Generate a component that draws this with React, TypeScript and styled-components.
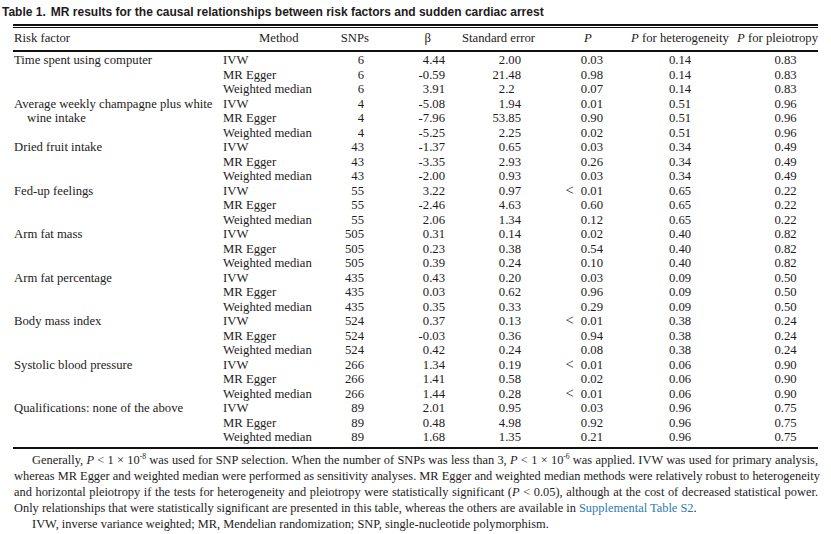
import React from 'react';
import styled, { createGlobalStyle } from 'styled-components';

const GlobalStyle = createGlobalStyle`
  html, body {
    margin: 0;
    padding: 0;
    background: #ffffff;
  }
`;

const Page = styled.div`
  width: 831px;
  box-sizing: border-box;
  padding: 5px 13px 0 13px;
  color: #1d1b1b;
  font-family: 'Liberation Serif', 'Times New Roman', serif;
`;

const Title = styled.div`
  margin-left: -11px;
  font-family: 'Liberation Sans', Arial, sans-serif;
  font-size: 12px;
  font-weight: 700;
  line-height: 14px;
  white-space: nowrap;

  b {
    margin-right: 5px;
  }
`;

const DoubleRule = styled.div`
  margin-top: 5px;
  height: 1px;
  border-top: 2px solid #111;
  border-bottom: 1px solid #111;
`;

const Table = styled.table`
  width: 805px;
  table-layout: fixed;
  border-collapse: collapse;
  font-size: 12.7px;
  border-bottom: 2px solid #111;

  thead tr {
    border-bottom: 2px solid #111;
  }

  tbody tr:first-child td {
    padding-top: 1px;
  }

  tbody tr:last-child td {
    padding-bottom: 2px;
  }
`;

const Col = styled.col<{ $w: number }>`
  width: ${p => p.$w}px;
`;

type Align = 'left' | 'right' | 'center';

const Th = styled.th<{ $align: Align; $pl?: number; $pr?: number }>`
  font-weight: 400;
  text-align: ${p => p.$align};
  padding: 3px ${p => p.$pr ?? 0}px 5px ${p => p.$pl ?? 0}px;
  line-height: 14px;
  white-space: nowrap;
`;

const Td = styled.td<{ $align: Align; $pl?: number; $pr?: number }>`
  text-align: ${p => p.$align};
  padding: 0 ${p => p.$pr ?? 0}px 0 ${p => p.$pl ?? 0}px;
  line-height: 14.5px;
  white-space: nowrap;
  vertical-align: top;
`;

const FactorCell = styled.td`
  padding: 0 0 0 14px;
  text-indent: -13px;
  line-height: 14.5px;
  vertical-align: top;
`;

const Frac = styled.span`
  display: inline-block;
  width: 1.25em;
  text-align: left;
`;

const Less = styled.span`
  font-size: 1.15em;
  line-height: 0;
  margin-right: 7px;
`;

const Notes = styled.div`
  margin-top: 3px;
  width: 805px;
  font-size: 12.4px;
  line-height: 16px;
`;

const NoteLine = styled.span<{ $indent?: boolean; $last?: boolean }>`
  display: block;
  white-space: nowrap;
  text-align: ${p => (p.$last ? 'left' : 'justify')};
  text-align-last: ${p => (p.$last ? 'left' : 'justify')};
  padding-left: ${p => (p.$indent ? 19 : 1)}px;
`;

const Sup = styled.sup`
  font-size: 7.5px;
  line-height: 0;
  vertical-align: 5px;
`;

const Link = styled.a`
  color: #2a7ab8;
  text-decoration: none;
`;

type Row = [string, number, string, string, string, string, string];

const groups: [string, Row[]][] = [
  ['Time spent using computer', [
    ['IVW', 6, '4.44', '2.00', '0.03', '0.14', '0.83'],
    ['MR Egger', 6, '-0.59', '21.48', '0.98', '0.14', '0.83'],
    ['Weighted median', 6, '3.91', '2.2', '0.07', '0.14', '0.83'],
  ]],
  ['Average weekly champagne plus white wine intake', [
    ['IVW', 4, '-5.08', '1.94', '0.01', '0.51', '0.96'],
    ['MR Egger', 4, '-7.96', '53.85', '0.90', '0.51', '0.96'],
    ['Weighted median', 4, '-5.25', '2.25', '0.02', '0.51', '0.96'],
  ]],
  ['Dried fruit intake', [
    ['IVW', 43, '-1.37', '0.65', '0.03', '0.34', '0.49'],
    ['MR Egger', 43, '-3.35', '2.93', '0.26', '0.34', '0.49'],
    ['Weighted median', 43, '-2.00', '0.93', '0.03', '0.34', '0.49'],
  ]],
  ['Fed-up feelings', [
    ['IVW', 55, '3.22', '0.97', '< 0.01', '0.65', '0.22'],
    ['MR Egger', 55, '-2.46', '4.63', '0.60', '0.65', '0.22'],
    ['Weighted median', 55, '2.06', '1.34', '0.12', '0.65', '0.22'],
  ]],
  ['Arm fat mass', [
    ['IVW', 505, '0.31', '0.14', '0.02', '0.40', '0.82'],
    ['MR Egger', 505, '0.23', '0.38', '0.54', '0.40', '0.82'],
    ['Weighted median', 505, '0.39', '0.24', '0.10', '0.40', '0.82'],
  ]],
  ['Arm fat percentage', [
    ['IVW', 435, '0.43', '0.20', '0.03', '0.09', '0.50'],
    ['MR Egger', 435, '0.03', '0.62', '0.96', '0.09', '0.50'],
    ['Weighted median', 435, '0.35', '0.33', '0.29', '0.09', '0.50'],
  ]],
  ['Body mass index', [
    ['IVW', 524, '0.37', '0.13', '< 0.01', '0.38', '0.24'],
    ['MR Egger', 524, '-0.03', '0.36', '0.94', '0.38', '0.24'],
    ['Weighted median', 524, '0.42', '0.24', '0.08', '0.38', '0.24'],
  ]],
  ['Systolic blood pressure', [
    ['IVW', 266, '1.34', '0.19', '< 0.01', '0.06', '0.90'],
    ['MR Egger', 266, '1.41', '0.58', '0.02', '0.06', '0.90'],
    ['Weighted median', 266, '1.44', '0.28', '< 0.01', '0.06', '0.90'],
  ]],
  ['Qualifications: none of the above', [
    ['IVW', 89, '2.01', '0.95', '0.03', '0.96', '0.75'],
    ['MR Egger', 89, '0.48', '4.98', '0.92', '0.96', '0.75'],
    ['Weighted median', 89, '1.68', '1.35', '0.21', '0.96', '0.75'],
  ]],
];

// keeps "2.2" lined up on the decimal point with the two-digit values
const Decimal: React.FC<{ value: string }> = ({ value }) => {
  const [whole, frac = ''] = value.split('.');
  return (
    <>
      <span>{whole}</span>
      <Frac>.{frac}</Frac>
    </>
  );
};

const PValue: React.FC<{ value: string }> = ({ value }) =>
  value.startsWith('<') ? (
    <>
      <Less>&lt;</Less>
      {value.slice(2)}
    </>
  ) : (
    <>{value}</>
  );

export default function App() {
  return (
    <Page>
      <GlobalStyle />
      <Title>
        <b>Table 1.</b>MR results for the causal relationships between risk factors and sudden cardiac arrest
      </Title>
      <DoubleRule />
      <Table>
        <colgroup>
          <Col $w={206} />
          <Col $w={107} />
          <Col $w={43} />
          <Col $w={80} />
          <Col $w={99} />
          <Col $w={75} />
          <Col $w={114} />
          <Col $w={81} />
        </colgroup>
        <thead>
          <tr>
            <Th $align="left" $pl={1}>Risk factor</Th>
            <Th $align="left" $pl={40}>Method</Th>
            <Th $align="right" $pr={0}>SNPs</Th>
            <Th $align="right" $pr={18}>β</Th>
            <Th $align="center">Standard error</Th>
            <Th $align="left" $pl={36}><i>P</i></Th>
            <Th $align="center"><i>P</i> for heterogeneity</Th>
            <Th $align="right"><i>P</i> for pleiotropy</Th>
          </tr>
        </thead>
        <tbody>
          {groups.map(([factor, rows]) =>
            rows.map((r, i) => (
              <tr key={factor + r[0]}>
                {i === 0 && <FactorCell rowSpan={3}>{factor}</FactorCell>}
                <Td $align="left" $pl={4}>{r[0]}</Td>
                <Td $align="right" $pr={5}>{r[1]}</Td>
                <Td $align="right" $pr={4}>{r[2]}</Td>
                <Td $align="right" $pr={27}><Decimal value={r[3]} /></Td>
                <Td $align="right" $pr={20}><PValue value={r[4]} /></Td>
                <Td $align="center">{r[5]}</Td>
                <Td $align="center" $pl={16}>{r[6]}</Td>
              </tr>
            ))
          )}
        </tbody>
      </Table>
      <Notes>
        <NoteLine $indent>
          Generally, <i>P</i> &lt; 1 × 10<Sup>-8</Sup> was used for SNP selection. When the number of SNPs was less than 3, <i>P</i> &lt; 1 × 10<Sup>-6</Sup> was applied. IVW was used for primary analysis,
        </NoteLine>
        <NoteLine>
          whereas MR Egger and weighted median were performed as sensitivity analyses. MR Egger and weighted median methods were relatively robust to heterogeneity
        </NoteLine>
        <NoteLine>
          and horizontal pleiotropy if the tests for heterogeneity and pleiotropy were statistically significant (<i>P</i> &lt; 0.05), although at the cost of decreased statistical power.
        </NoteLine>
        <NoteLine $last>
          Only relationships that were statistically significant are presented in this table, whereas the others are available in <Link>Supplemental Table S2</Link>.
        </NoteLine>
        <NoteLine $indent $last>
          IVW, inverse variance weighted; MR, Mendelian randomization; SNP, single-nucleotide polymorphism.
        </NoteLine>
      </Notes>
    </Page>
  );
}
